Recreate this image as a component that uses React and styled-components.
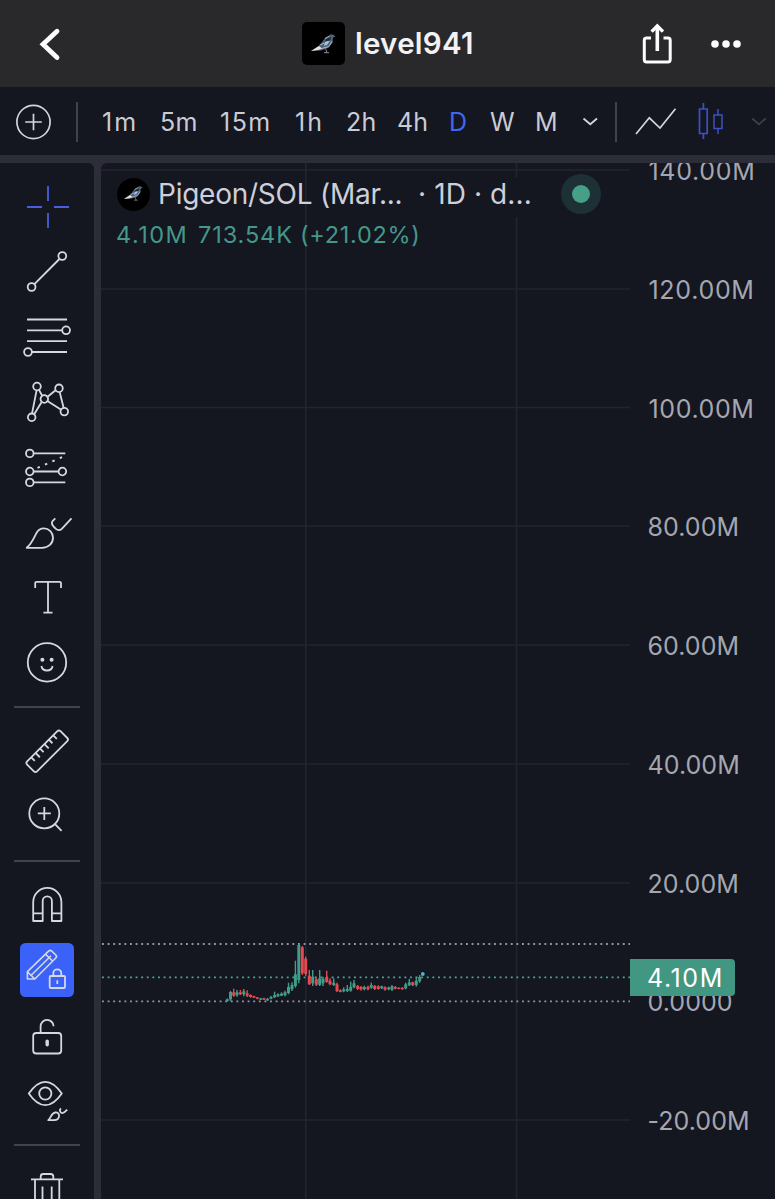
import styled, { createGlobalStyle } from "styled-components";

const GlobalStyle = createGlobalStyle`
    * {
        box-sizing: border-box;
    }
    body {
        margin: 0;
        background: #2c2d38;
        font-family: Inter, Roboto, "Liberation Sans", sans-serif;
    }
    svg {
        display: block;
        flex-shrink: 0;
    }
`

const Screen = styled.div`
    display: flex;
    flex-direction: column;
    width: 775px;
    height: 1199px;
    overflow: hidden;
    background: #2c2d38;
`

const Header = styled.header`
    display: grid;
    grid-template-columns: 1fr auto 1fr;
    align-items: center;
    height: 87px;
    padding: 0 31px 0 36px;
    background: #29292c;
    color: #fcfcfd;
`

const Title = styled.div`
    display: flex;
    align-items: center;
    gap: 10px;
    margin-right: 5px;
`

const TitleText = styled.h1`
    width: 118px;
    margin: 0;
    font-size: 29.5px;
    font-weight: 600;
    line-height: 43px;
    letter-spacing: 0.25px;
    white-space: nowrap;
    color: #f2f2f4;
`

const HeaderActions = styled.div`
    display: flex;
    justify-content: flex-end;
    align-items: center;
    gap: 32px;
`

const TokenImage = styled.div`
    display: flex;
    align-items: center;
    justify-content: center;
    width: ${({ $size }) => $size}px;
    height: ${({ $size }) => $size}px;
    flex-shrink: 0;
    border-radius: ${({ $round }) => ($round ? "50%" : "5px")};
    background: #000;
`

const Toolbar = styled.nav`
    display: flex;
    align-items: center;
    height: 68px;
    padding: 1px 0 0 15px;
    background: #141620;
    color: #d3d5de;
`

const ToolbarDivider = styled.div`
    width: 2px;
    height: 40px;
    flex-shrink: 0;
    background: #40424c;
`

const Intervals = styled.div`
    display: flex;
    margin-left: 23px;
`

const Interval = styled.button`
    width: ${({ $width }) => $width}px;
    padding: 0 0 0 1px;
    border: 0;
    background: none;
    font-family: inherit;
    font-size: 25px;
    line-height: 30px;
    letter-spacing: ${({ $spacing = 0.2 }) => $spacing}px;
    text-align: left;
    color: ${({ $active }) => ($active ? "#3f66f5" : "#c9cbd5")};
`

const Body = styled.main`
    display: flex;
    flex: 1;
    gap: 7px;
    min-height: 0;
    padding-top: 8px;
`

const Sidebar = styled.aside`
    display: flex;
    flex-direction: column;
    align-items: center;
    width: 94px;
    padding-top: 11px;
    overflow: hidden;
    border-top-right-radius: 6px;
    background: #141620;
`

const Tool = styled.button`
    display: flex;
    width: 94px;
    height: 65px;
    flex-shrink: 0;
    justify-content: center;
    padding: 0;
    border: 0;
    background: none;
    color: ${({ $active }) => ($active ? "#4a5fdc" : "#d5d8e2")};
`

const ToolDivider = styled.div`
    width: 66px;
    height: 2px;
    flex-shrink: 0;
    margin: 12px 0 10px;
    background: #40424c;
`

const Chart = styled.section`
    position: relative;
    display: flex;
    flex: 1;
    overflow: hidden;
    border-top-left-radius: 6px;
    background: #141620;
`

const PriceAxis = styled.div`
    position: relative;
    width: 145px;
    margin-top: -51px;
`

const PriceLabel = styled.div`
    height: 118.75px;
    padding-left: ${({ $spacing }) => ($spacing ? 18.5 : 17.5)}px;
    font-size: 25px;
    line-height: 118.75px;
    letter-spacing: ${({ $spacing = 0.05 }) => $spacing}px;
    white-space: nowrap;
    color: #a4a6b0;
`

const LastPrice = styled.div`
    position: absolute;
    top: 847px;
    left: 0;
    width: 105px;
    height: 37px;
    padding-left: 17px;
    border-radius: 0 4px 4px 0;
    background: #429783;
    font-size: 25px;
    line-height: 38px;
    letter-spacing: 1.6px;
    color: #fff;
`

const Legend = styled.div`
    position: absolute;
    top: 12px;
    left: 16px;
`

const LegendRow = styled.div`
    display: flex;
    align-items: center;
    height: 38px;
    font-size: 28px;
    letter-spacing: -0.25px;
    white-space: pre;
    color: #cdcfd9;
`

const SymbolName = styled.span`
    width: 260px;
    margin-left: 8px;
`

const SymbolInfo = styled.span`
    width: 143px;
    letter-spacing: 0.1px;
`

const MarketStatus = styled.div`
    display: flex;
    align-items: center;
    justify-content: center;
    width: 40px;
    height: 40px;
    border-radius: 50%;
    background: #1c3036;

    &::before {
        content: "";
        width: 18px;
        height: 18px;
        border-radius: 50%;
        background: #45a086;
    }
`

const LegendValues = styled.div`
    display: flex;
    height: 32px;
    margin-top: 5px;
    margin-left: -1px;
    font-size: 23.5px;
    line-height: 34px;
    white-space: pre;
    color: #45978a;
`

const LegendValue = styled.span`
    width: ${({ $width }) => $width}px;
    letter-spacing: ${({ $spacing }) => $spacing}px;
`

const intervals = [
    { label: "1m", width: 58, spacing: 2 },
    { label: "5m", width: 60 },
    { label: "15m", width: 75, spacing: 1.5 },
    { label: "1h", width: 51, spacing: 2 },
    { label: "2h", width: 51 },
    { label: "4h", width: 52 },
    { label: "D", width: 41, active: true },
    { label: "W", width: 45 },
    { label: "M", width: 48 },
]

const prices = [
    { label: "140.00M", spacing: 0.7 },
    { label: "120.00M", spacing: 0.7 },
    { label: "100.00M", spacing: 0.6 },
    { label: "80.00M" },
    { label: "60.00M" },
    { label: "40.00M" },
    { label: "20.00M" },
    { label: "0.0000" },
    { label: "-20.00M" },
]

const gridRows = [170, 289, 407.5, 526, 645, 764, 883, 1120]

const UP = "#3f9d89"
const DOWN = "#e64a50"

// x, high, low, body top, body bottom, rising
const candles = [
    [227.3, 998.5, 1001.5, 999.3, 1001, 1],
    [230.5, 991, 1001, 992, 999.3, 1],
    [233.7, 988.7, 996.7, 992.3, 995.7, 0],
    [237, 990, 996.7, 992.3, 995.3, 1],
    [240.4, 990, 995, 992.3, 994.3, 0],
    [243.8, 989, 996.3, 991.3, 994.3, 1],
    [247.2, 990.3, 997, 993.3, 995.7, 0],
    [250.5, 994.3, 997.7, 995, 997, 0],
    [253.9, 995.7, 997.7, 996, 997.7, 0],
    [257.3, 997, 999.3, 997.3, 998.7, 0],
    [260.7, 998, 1000, 998.3, 999.7, 1],
    [264, 997.7, 1000, 998.3, 999.7, 0],
    [267.5, 998, 1001, 999, 1000.3, 1],
    [271, 996, 999.3, 997, 998.7, 1],
    [274.6, 991.7, 998, 995, 997.3, 1],
    [278, 993.3, 997, 994.3, 996.3, 1],
    [281.5, 992.3, 996, 993.7, 995.7, 1],
    [285, 990.7, 996.3, 992.3, 995.3, 1],
    [288.5, 982.7, 994.3, 987, 993, 1],
    [292, 982.3, 991, 985, 989.3, 1],
    [295.4, 960.7, 987.7, 974.3, 986, 1],
    [298.8, 944, 983.3, 945, 980, 1],
    [302.3, 946, 975, 947.3, 973.3, 0],
    [305.7, 956.7, 976, 958.7, 974, 0],
    [309.3, 970, 985, 975.7, 984.3, 0],
    [312.7, 970, 986, 976.7, 983.3, 1],
    [316.3, 977.7, 986, 979.3, 984.7, 0],
    [319.7, 970, 986, 978.3, 985, 1],
    [323, 976.7, 986, 978.7, 983.3, 1],
    [326.7, 970.7, 982.7, 977, 982, 0],
    [330, 978.3, 985.3, 980.7, 984.3, 0],
    [333.7, 978.3, 986, 982.7, 985, 1],
    [337, 982.7, 992, 984.3, 991, 0],
    [340.3, 989.3, 992.3, 990.3, 992, 0],
    [343.7, 987.3, 992.3, 989.3, 991.3, 1],
    [347.3, 985, 992, 989, 991, 1],
    [350.7, 981.7, 991.7, 986.7, 990.7, 1],
    [354, 980, 988.3, 983.3, 987.3, 1],
    [357.7, 985, 990, 986, 989, 0],
    [361, 986, 990.7, 987, 989.3, 0],
    [364.3, 985.7, 990.3, 987, 989.3, 1],
    [368, 985.7, 990.3, 987, 989.3, 0],
    [371.3, 982.7, 988.7, 985, 987.7, 1],
    [374.7, 985, 990, 986, 989, 0],
    [378.3, 985.3, 989.7, 986.3, 989, 0],
    [381.7, 985.7, 989, 986.3, 988.3, 1],
    [385, 986.3, 990.7, 987.3, 989.7, 0],
    [388.7, 986.7, 990.3, 987.3, 989.3, 1],
    [392, 985, 991, 986.3, 989.7, 1],
    [395.3, 986, 989.3, 987, 988.7, 0],
    [398.7, 987.3, 989.3, 987.7, 989, 0],
    [402.3, 987.3, 989.7, 987.7, 989.3, 0],
    [405.7, 982.7, 989.3, 984.3, 988.3, 1],
    [409.3, 979, 986, 982.3, 985.3, 1],
    [412.7, 981.7, 986, 982.3, 985.3, 0],
    [416.3, 976.7, 986.7, 980.7, 985, 1],
    [419.7, 975, 982.7, 977, 981.3, 1],
]

function Pigeon({ width }){
    return (
        <svg width={width} height={width * 0.8} viewBox="0 0 25 20">
            <path d="M0 17 L9 11 L14 4 L18 2 L19 .6 L22 .4 L24.5 2.4 L22 3.5 L21.5 9 L17 14 L10 16.5 Z" fill="#536273" />
            <path d="M0 17 L8 12 L11 14.5 L7 16 Z" fill="#e3e3e3" />
            <path d="M15 5 L20 3 L19 8 L12 12 Z" fill="#1b2b40" />
            <path d="M14.5 7.5 L19.5 6.5 L16 11 L12.5 12 Z" fill="#8fbce9" />
            <path d="M14 4.5 L18.5 2 M8.5 11 L17 8 M7 15.5 L18 12.5 L21 7" stroke="#c4d0dc" strokeWidth=".8" fill="none" />
            <path d="M14.5 14.5 L16 18.5 M13 18.7 H18" stroke="#a8959a" strokeWidth=".9" />
        </svg>
    )
}

// All sidebar icons share one canvas with its origin in the middle
function ToolIcon({ children }){
    return (
        <svg width="66" height="65" viewBox="-33 -33 66 65" fill="none" stroke="currentColor" strokeWidth="1.8" strokeLinejoin="round">
            {children}
        </svg>
    )
}

function CrossIcon(){
    return <ToolIcon><path d="M1 -21 V-6 M1 6 V21 M-20 0 H-5 M7 0 H22" /></ToolIcon>
}

function TrendIcon(){
    return (
        <ToolIcon>
            <path d="M-12.6 12.2 L12.4 -13" />
            <circle cx="-15.4" cy="15" r="3.9" />
            <circle cx="15.3" cy="-16" r="3.9" />
        </ToolIcon>
    )
}

function FibIcon(){
    return (
        <ToolIcon>
            <path d="M-20 -17.5 H20 M-20 -6.7 H15.2 M-20 4.2 H20 M-15 15 H20" />
            <circle cx="19.1" cy="-6.7" r="3.9" />
            <circle cx="-19" cy="15" r="3.9" />
        </ToolIcon>
    )
}

function PatternIcon(){
    return (
        <ToolIcon>
            <path d="M-10.4 -11.7 L-15 11.6 M-8 -12.2 L-5 -6.5 M.6 -5.2 L8.6 -11.8 M12.6 -10.2 L16.6 5.7 M.4 -1 L13.8 7.6 M-5.5 .3 L-12.8 12.3" />
            <circle cx="-10" cy="-15.5" r="3.8" />
            <circle cx="12" cy="-13.7" r="3.8" />
            <circle cx="-2.7" cy="-3" r="3.8" />
            <circle cx="17.3" cy="9.6" r="3.8" />
            <circle cx="-15.3" cy="15.3" r="3.8" />
        </ToolIcon>
    )
}

function ForecastIcon(){
    return (
        <ToolIcon>
            <path d="M-13 -13.6 H18.3 M-13 4.5 H11.6 M-13 15.4 H18.3" />
            <path d="M-9.5 .9 L15.5 -10" strokeWidth="2" strokeDasharray="2.5 5.6" />
            <circle cx="-17.2" cy="-13.6" r="3.8" />
            <circle cx="-17.2" cy="4.5" r="3.8" />
            <circle cx="15.4" cy="4.5" r="3.8" />
            <circle cx="-17.2" cy="15.4" r="3.8" />
        </ToolIcon>
    )
}

function BrushIcon(){
    return (
        <ToolIcon>
            <path d="M-20.3 15.8 C-15 11.5 -12.5 4.5 -10.5 1 C-8.8 -2 -6.5 -3.6 -3.2 -3.6 C2 -3.6 6 .4 6 5.7 C6 11.5 1.5 15.8 -5 15.8 Z" />
            <path d="M8.3 -13.7 L5.8 -11.2 C4.4 -9.5 4.7 -7.6 6.5 -5.6 L8.6 -3.4 C10.8 -1.4 13 -1.4 15 -3.4 L24.5 -13.7" />
        </ToolIcon>
    )
}

function TextIcon(){
    return <ToolIcon><path d="M-11.8 -9 V-14 Q-11.8 -15.2 -10.5 -15.2 H12.7 Q14 -15.2 14 -14 V-9 M1 -15.2 V15.7 M-3.6 15.7 H5.5" /></ToolIcon>
}

function SmileIcon(){
    return (
        <ToolIcon>
            <circle cx="0" cy=".4" r="19.2" />
            <circle cx="-4.6" cy="-2.3" r="2" fill="currentColor" stroke="none" />
            <circle cx="4.6" cy="-2.3" r="2" fill="currentColor" stroke="none" />
            <path d="M-5.6 4 C-4.5 10 4.5 10 5.6 4" />
        </ToolIcon>
    )
}

function RulerIcon(){
    return (
        <ToolIcon>
            <g transform="translate(.2 .3) rotate(-45)">
                <rect x="-23.6" y="-7" width="47.2" height="14" rx="2.2" />
                <path d="M-15.6 -7 V-2 M-9.4 -7 V-1 M-3.1 -7 V-2 M3.1 -7 V-1 M9.4 -7 V-2 M15.6 -7 V-2" />
            </g>
        </ToolIcon>
    )
}

function ZoomIcon(){
    return (
        <ToolIcon>
            <circle cx="-2.7" cy="-2.6" r="15" />
            <path d="M-9.2 -2.6 H3.8 M-2.7 -9.1 V3.9 M8 8.2 L14.6 14.8" />
        </ToolIcon>
    )
}

function MagnetIcon(){
    return (
        <ToolIcon>
            <path d="M-13.8 16 V-3 A14.1 14.1 0 0 1 14.4 -3 V16 H4.9 V-4 A4.6 4.6 0 0 0 -4.3 -4 V16 Z M-13.8 8.3 H-4.3 M4.9 8.3 H14.4" />
        </ToolIcon>
    )
}

function DrawLockIcon(){
    return (
        <ToolIcon>
            <rect x="-27" y="-27" width="54" height="54" rx="5.5" fill="#3a62f8" stroke="none" />
            <path d="M-19.6 9 V1.7 L1.6 -18.8 Q3.2 -20.3 4.8 -18.8 L8.8 -15 Q10.3 -13.5 8.8 -12 L-12.2 9 Z M-19.6 1.7 L-12.2 9 M-15.8 5.3 L4 -14.3 M-1.6 -15.8 L5.6 -9" strokeWidth="1.6" />
            <rect x="2.7" y="6" width="15.3" height="12" rx="1" />
            <path d="M6.3 6 V3.3 A4 4 0 0 1 14.3 3.3 V6 M10.3 10.3 V14" />
        </ToolIcon>
    )
}

function UnlockIcon(){
    return (
        <ToolIcon>
            <rect x="-13.8" y="-2" width="28" height="20.5" rx="3" />
            <path d="M-6.4 -2 V-8.5 A6.5 6.5 0 0 1 6.6 -8.7" />
            <path d="M.2 6.2 V9.8" strokeWidth="3.4" strokeLinecap="round" />
        </ToolIcon>
    )
}

function HideIcon(){
    return (
        <ToolIcon>
            <path d="M-18.2 -6.5 C-13 -14 -7.5 -18.2 -1.7 -18.2 S 9.6 -14 14.8 -6.5 C9.6 1 4.1 5.2 -1.7 5.2 S -13 1 -18.2 -6.5 Z" />
            <circle cx="-1.7" cy="-6.5" r="6.1" />
            <path d="M1.3 20.2 C4 17.8 4.2 13 8.3 12.5 C10.8 12.2 12.3 13.8 12.1 15.8 C11.9 18.6 9.8 20.2 7 20.2 Z M14 8.4 C11.6 10.2 13.8 13.6 15.8 13 C17.2 12.6 18.3 11.6 20.2 9.6" />
        </ToolIcon>
    )
}

function TrashIcon(){
    return (
        <ToolIcon>
            <path d="M-16 -9.6 H16 M-6.3 -10 V-12.5 Q-6.3 -15 -3.8 -15 H3.8 Q6.3 -15 6.3 -12.5 V-10 M-12 -9.6 V21 H12.3 V-9.6 M-4.5 -2.5 V15 M4.7 -2.5 V15" />
        </ToolIcon>
    )
}

const toolGroups = [
    [CrossIcon, TrendIcon, FibIcon, PatternIcon, ForecastIcon, BrushIcon, TextIcon, SmileIcon],
    [RulerIcon, ZoomIcon],
    [MagnetIcon, DrawLockIcon, UnlockIcon, HideIcon],
    [TrashIcon],
]

const PlusWrap = styled.div`
    width: 37px;
    margin-right: 24px;
`

const ChartTypes = styled.div`
    display: flex;
    align-items: center;
`

function TopBar(){
    return (
        <Header>
            <svg width="30" height="36" viewBox="36 25 30 36" fill="none" stroke="currentColor" strokeWidth="4.8" strokeLinecap="round">
                <path d="M57 30.2 L43 43.3 L57 56.5" strokeLinejoin="miter" />
            </svg>
            <Title>
                <TokenImage $size={43}><Pigeon width={25} /></TokenImage>
                <TitleText>level941</TitleText>
            </Title>
            <HeaderActions>
                <svg width="40" height="44" viewBox="637 22 40 44" fill="none" stroke="currentColor" strokeWidth="3">
                    <path d="M651 38 H646.5 Q644.3 38 644.3 40.2 V59.8 Q644.3 62 646.5 62 H668 Q670.2 62 670.2 59.8 V40.2 Q670.2 38 668 38 H663.5" />
                    <path d="M657.3 51 V28" strokeWidth="3.6" />
                    <path d="M651.6 31.6 L657.3 26 L663 31.6" strokeWidth="3.4" />
                </svg>
                <svg width="35" height="12" viewBox="709 37.5 35 12" fill="currentColor">
                    <circle cx="715" cy="43.5" r="3.8" />
                    <circle cx="726" cy="43.5" r="3.8" />
                    <circle cx="737" cy="43.5" r="3.8" />
                </svg>
            </HeaderActions>
        </Header>
    )
}

function IntervalBar(){
    return (
        <Toolbar>
            <PlusWrap>
                <svg width="37" height="37" viewBox="-18.5 -19 37 37" fill="none" stroke="currentColor" strokeWidth="1.7">
                    <circle r="16.6" />
                    <path d="M-8.3 0 H8.3 M0 -8.3 V8.3" />
                </svg>
            </PlusWrap>
            <ToolbarDivider />
            <Intervals>
                {intervals.map(({ label, width, spacing, active }) => (
                    <Interval key={label} $width={width} $spacing={spacing} $active={active}>{label}</Interval>
                ))}
            </Intervals>
            <ChartTypes>
                <svg width="33" height="12" viewBox="582 116 33 12" fill="none" stroke="currentColor" strokeWidth="1.8">
                    <path d="M583.5 118.5 L590.3 124.3 L597 118.5" />
                </svg>
                <ToolbarDivider />
                <svg width="158" height="40" viewBox="617 102 158 40" fill="none" strokeWidth="1.7">
                    <path d="M636 134 L649.3 117.8 L660 128 L675.5 108.8" stroke="currentColor" />
                    <g stroke="#3c50c8">
                        <path d="M699.5 109 H707.2 V133.5 H699.5 Z M703.4 103 V109 M703.4 133.5 V139" />
                        <path d="M714 115 H722 V128.5 H714 Z M718 109 V115 M718 128.5 V134" strokeWidth="1.5" />
                    </g>
                    <path d="M752.3 118.5 L759 124.3 L765.7 118.5" stroke="#3e414d" />
                </svg>
            </ChartTypes>
        </Toolbar>
    )
}

function Plot(){
    return (
        <svg width="529" height="1036" viewBox="101 163 529 1036">
            {gridRows.map((y) => (
                <line key={y} x1="101" x2="630" y1={y} y2={y} stroke="#22242e" strokeWidth="1.6" />
            ))}
            <path d="M305.7 163 V1199 M516.5 163 V177 M516.5 217 V1199" stroke="#22242e" strokeWidth="1.6" />
            <g strokeWidth="1.8" strokeDasharray="1.9 3.7">
                <path d="M102 944 H630 M102 1001.3 H630" stroke="#9295a0" />
                <path d="M102 977.3 H630" stroke="#4ca592" />
            </g>
            {candles.map(([x, high, low, top, bottom, rising]) => (
                <g key={x} fill={rising ? UP : DOWN}>
                    <rect x={x - 0.7} y={high} width="1.4" height={low - high} />
                    <rect x={x - 1.5} y={top} width="3" height={bottom - top} />
                </g>
            ))}
            <circle cx="422.8" cy="974" r="1.9" fill="#51b4bf" />
        </svg>
    )
}

function App(){
    return (
        <Screen>
            <GlobalStyle />
            <TopBar />
            <IntervalBar />
            <Body>
                <Sidebar>
                    {toolGroups.map((group, i) => [
                        i > 0 && <ToolDivider key={`divider-${i}`} />,
                        ...group.map((Icon, j) => (
                            <Tool key={`${i}-${j}`} $active={Icon === CrossIcon}><Icon /></Tool>
                        )),
                    ])}
                </Sidebar>
                <Chart>
                    <Plot />
                    <PriceAxis>
                        {prices.map(({ label, spacing }) => (
                            <PriceLabel key={label} $spacing={spacing}>{label}</PriceLabel>
                        ))}
                        <LastPrice>4.10M</LastPrice>
                    </PriceAxis>
                    <Legend>
                        <LegendRow>
                            <TokenImage $size={33} $round><Pigeon width={19} /></TokenImage>
                            <SymbolName>Pigeon/SOL (Mar...</SymbolName>
                            <SymbolInfo>· 1D · d...</SymbolInfo>
                            <MarketStatus />
                        </LegendRow>
                        <LegendValues>
                            <LegendValue $width={82} $spacing={1.5}>4.10M</LegendValue>
                            <LegendValue $width={102} $spacing={0.9}>713.54K</LegendValue>
                            <LegendValue $width={120} $spacing={0.7}>(+21.02%)</LegendValue>
                        </LegendValues>
                    </Legend>
                </Chart>
            </Body>
        </Screen>
    )
}

export default App;
